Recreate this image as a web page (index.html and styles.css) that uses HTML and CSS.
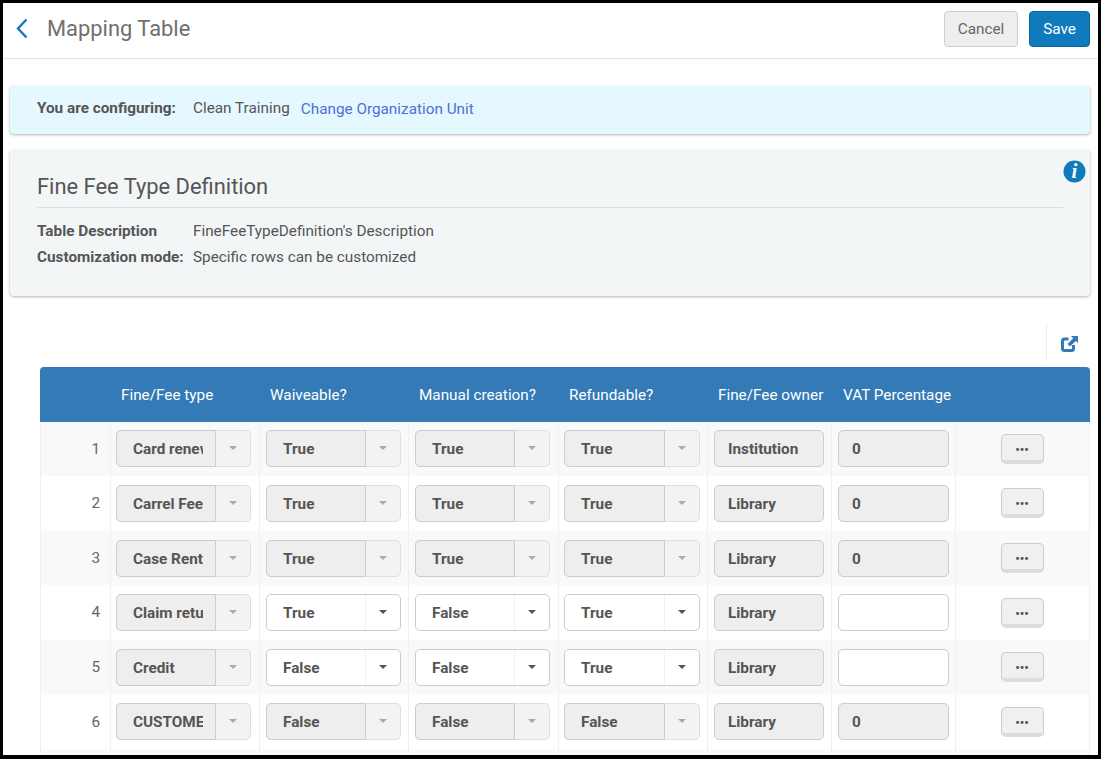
FILE: index.html
```html
<!DOCTYPE html>
<html>
<head>
  <title>Mapping Table</title>
  <meta name="viewport" content="width=device-width, initial-scale=1">
  <link rel="stylesheet" href="styles.css">
</head>
<body>
  <div class="frame">
    <header class="topbar">
      <svg class="back" width="12" height="21" viewBox="0 0 12 21"><path d="M10.5 1.5 L2 10.5 L10.5 19.5" fill="none" stroke="#0f7abc" stroke-width="2.4"/></svg>
      <h1>Mapping Table</h1>
      <button class="btn btn-cancel">Cancel</button>
      <button class="btn btn-save">Save</button>
    </header>

    <div class="banner">
      <b class="banner-label">You are configuring:</b>
      <span>Clean Training</span>
      <a href="#" class="banner-link">Change Organization Unit</a>
    </div>

    <div class="card">
      <svg class="info-icon" width="23" height="23" viewBox="0 0 23 23"><circle cx="11.5" cy="11.5" r="11" fill="#0f7abc"/><text x="11.5" y="18" text-anchor="middle" class="info-i">i</text></svg>
      <h2>Fine Fee Type Definition</h2>
      <div class="card-row"><b>Table Description</b><span>FineFeeTypeDefinition's Description</span></div>
      <div class="card-row"><b>Customization mode:</b><span>Specific rows can be customized</span></div>
    </div>

    <div class="toolbar">
      <div class="tool">
        <svg width="17" height="16" viewBox="0 0 17 16">
          <path d="M7.5 3 H3.5 Q1.5 3 1.5 5 V12.5 Q1.5 14.5 3.5 14.5 H10.5 Q12.5 14.5 12.5 12.5 V9" fill="none" stroke="#337ab7" stroke-width="3"/>
          <path d="M10 0 H17 V7 L14.8 4.9 L9 10.5 L6.5 8 L12.2 2.2 Z" fill="#337ab7"/>
        </svg>
      </div>
    </div>

    <div class="grid">
      <div class="row head">
        <div></div>
        <div class="th">Fine/Fee type</div>
        <div class="th">Waiveable?</div>
        <div class="th">Manual creation?</div>
        <div class="th">Refundable?</div>
        <div class="th">Fine/Fee owner</div>
        <div class="th th-vat">VAT Percentage</div>
        <div></div>
      </div>

      <div class="row">
        <div class="num">1</div>
        <div class="cell"><div class="sel off"><span class="val">Card renewal</span><i class="arrow"></i></div></div>
        <div class="cell"><div class="sel off"><span class="val">True</span><i class="arrow"></i></div></div>
        <div class="cell"><div class="sel off"><span class="val">True</span><i class="arrow"></i></div></div>
        <div class="cell"><div class="sel off"><span class="val">True</span><i class="arrow"></i></div></div>
        <div class="cell"><div class="field off">Institution</div></div>
        <div class="cell"><div class="field off">0</div></div>
        <div class="cell act"><button class="more">•••</button></div>
      </div>

      <div class="row">
        <div class="num">2</div>
        <div class="cell"><div class="sel off"><span class="val">Carrel Fee</span><i class="arrow"></i></div></div>
        <div class="cell"><div class="sel off"><span class="val">True</span><i class="arrow"></i></div></div>
        <div class="cell"><div class="sel off"><span class="val">True</span><i class="arrow"></i></div></div>
        <div class="cell"><div class="sel off"><span class="val">True</span><i class="arrow"></i></div></div>
        <div class="cell"><div class="field off">Library</div></div>
        <div class="cell"><div class="field off">0</div></div>
        <div class="cell act"><button class="more">•••</button></div>
      </div>

      <div class="row">
        <div class="num">3</div>
        <div class="cell"><div class="sel off"><span class="val">Case Rental</span><i class="arrow"></i></div></div>
        <div class="cell"><div class="sel off"><span class="val">True</span><i class="arrow"></i></div></div>
        <div class="cell"><div class="sel off"><span class="val">True</span><i class="arrow"></i></div></div>
        <div class="cell"><div class="sel off"><span class="val">True</span><i class="arrow"></i></div></div>
        <div class="cell"><div class="field off">Library</div></div>
        <div class="cell"><div class="field off">0</div></div>
        <div class="cell act"><button class="more">•••</button></div>
      </div>

      <div class="row">
        <div class="num">4</div>
        <div class="cell"><div class="sel off"><span class="val">Claim returned</span><i class="arrow"></i></div></div>
        <div class="cell"><div class="sel"><span class="val">True</span><i class="arrow"></i></div></div>
        <div class="cell"><div class="sel"><span class="val">False</span><i class="arrow"></i></div></div>
        <div class="cell"><div class="sel"><span class="val">True</span><i class="arrow"></i></div></div>
        <div class="cell"><div class="field off">Library</div></div>
        <div class="cell"><div class="field"></div></div>
        <div class="cell act"><button class="more">•••</button></div>
      </div>

      <div class="row">
        <div class="num">5</div>
        <div class="cell"><div class="sel off"><span class="val">Credit</span><i class="arrow"></i></div></div>
        <div class="cell"><div class="sel"><span class="val">False</span><i class="arrow"></i></div></div>
        <div class="cell"><div class="sel"><span class="val">False</span><i class="arrow"></i></div></div>
        <div class="cell"><div class="sel"><span class="val">True</span><i class="arrow"></i></div></div>
        <div class="cell"><div class="field off">Library</div></div>
        <div class="cell"><div class="field"></div></div>
        <div class="cell act"><button class="more">•••</button></div>
      </div>

      <div class="row">
        <div class="num">6</div>
        <div class="cell"><div class="sel off"><span class="val">CUSTOMER</span><i class="arrow"></i></div></div>
        <div class="cell"><div class="sel off"><span class="val">False</span><i class="arrow"></i></div></div>
        <div class="cell"><div class="sel off"><span class="val">False</span><i class="arrow"></i></div></div>
        <div class="cell"><div class="sel off"><span class="val">False</span><i class="arrow"></i></div></div>
        <div class="cell"><div class="field off">Library</div></div>
        <div class="cell"><div class="field off">0</div></div>
        <div class="cell act"><button class="more">•••</button></div>
      </div>

      <div class="row">
        <div class="num"></div>
        <div class="cell"></div>
        <div class="cell"></div>
        <div class="cell"></div>
        <div class="cell"></div>
        <div class="cell"></div>
        <div class="cell"></div>
        <div class="cell act"></div>
      </div>
    </div>
  </div>
</body>
</html>
```

FILE: styles.css
```css
* {
  box-sizing: border-box;
  margin: 0;
  padding: 0;
}

html, body {
  height: 759px;
  overflow: hidden;
}

body {
  font-family: Roboto, "Liberation Sans", sans-serif;
  font-size: 15.3px;
  color: #555;
  background-color: #000;
}

.frame {
  width: 1095px;
  height: 752px;
  margin: 3px 0 0 3px;
  background-color: #fff;
  overflow: hidden;
}

.topbar {
  display: flex;
  align-items: center;
  height: 56px;
  border-bottom: 1px solid #e4e4e4;
  padding: 0 8px 4px 13px;
}

.back {
  margin-right: 19px;
}

.topbar h1 {
  flex: 1;
  font-size: 21.9px;
  font-weight: 400;
  color: #6f6f6f;
}

.btn {
  height: 36px;
  border-radius: 4px;
  font-family: inherit;
  font-size: 15.3px;
}

.btn-cancel {
  width: 74px;
  margin-right: 11px;
  background-color: #eee;
  border: 1px solid #ccc;
  color: #666;
}

.btn-save {
  width: 61px;
  background-color: #0f7abc;
  border: 1px solid #0b669e;
  color: #fff;
}

.banner {
  display: flex;
  align-items: center;
  height: 48px;
  margin: 27px 8px 0 7px;
  padding: 0 0 4px 27px;
  background-color: #e5f8ff;
  border-radius: 4px;
  box-shadow: 0 1px 3px rgba(0, 0, 0, 0.3);
}

.banner-label {
  width: 156px;
  font-weight: 700;
}

.banner-link {
  margin: 2px 0 0 11px;
  color: #4e6fd6;
  text-decoration: none;
}

.card {
  position: relative;
  height: 146px;
  margin: 16px 8px 0 7px;
  padding: 24px 27px 0;
  background-color: #f3f6f7;
  border-radius: 4px;
  box-shadow: 0 1px 3px rgba(0, 0, 0, 0.3);
}

.card h2 {
  height: 34px;
  margin-bottom: 10px;
  border-bottom: 1px solid #ddd;
  font-size: 21.9px;
  font-weight: 400;
  color: #555;
}

.card-row {
  display: flex;
  height: 26px;
  line-height: 26px;
}

.card-row b {
  width: 156px;
}

.info-icon {
  position: absolute;
  top: 10px;
  right: 4px;
}

.info-i {
  font-family: "Liberation Serif", serif;
  font-size: 21px;
  font-style: italic;
  font-weight: 700;
  fill: #fff;
}

.toolbar {
  display: flex;
  justify-content: flex-end;
  height: 71px;
  padding: 27px 8px 0 0;
}

.tool {
  display: flex;
  align-items: center;
  width: 44px;
  height: 38px;
  padding: 4px 0 0 14px;
  border-left: 1px solid #eee;
}

.grid {
  margin: 0 8px 0 37px;
}

.row {
  display: grid;
  grid-template-columns: 70px 149px 149px 150px 149px 124px 124px 135px;
  height: 54.6px;
  background-color: #fff;
}

.row:nth-child(even) {
  background-color: #f9f9f9;
}

.row.head {
  align-items: center;
  padding-top: 1px;
  background-color: #337ab7;
  border-radius: 4px 4px 0 0;
  color: #fff;
}

.th {
  padding: 0 0 0 11px;
  white-space: nowrap;
}

.th-vat {
  padding-left: 12px;
}

.num {
  padding: 18px 10px 0 0;
  text-align: right;
  color: #666;
  border-left: 1px solid #f0f0f0;
}

.cell {
  display: flex;
  align-items: center;
  padding: 0 7px 0 6px;
  border-left: 1px solid #f0f0f0;
}

.cell:nth-child(2) {
  padding: 0 8px 0 5px;
}

.cell:nth-child(4) {
  padding-right: 8px;
}

.cell:nth-child(5) {
  padding-left: 5px;
}

.cell:nth-child(7) {
  padding-right: 6px;
}

.cell.act {
  justify-content: center;
  border-right: 1px solid #f0f0f0;
}

.sel {
  display: flex;
  flex: 1 1 0;
  min-width: 0;
  height: 37px;
  background-color: #fff;
  border: 1px solid #c3ced9;
  border-radius: 5px;
  font-weight: 700;
}

/* the text stops short of the divider, as in a truncated select */
.val {
  position: relative;
  flex: 1 1 0;
  min-width: 0;
  padding-left: 16px;
  line-height: 36px;
  white-space: nowrap;
  overflow: hidden;
  border-right: 1px solid #f2f2f2;
  border-radius: 5px 0 0 5px;
  background-color: #fff;
}

.val::after {
  content: "";
  position: absolute;
  top: 0;
  right: 0;
  bottom: 0;
  width: 12px;
  background-color: inherit;
}

.arrow {
  position: relative;
  flex: 0 0 34px;
}

.arrow::after {
  content: "";
  position: absolute;
  top: 15px;
  left: 13px;
  border-top: 4px solid #555;
  border-left: 4px solid transparent;
  border-right: 4px solid transparent;
}

.sel.off {
  background-color: #f3f3f3;
  border-color: #dcdfe3;
}

.sel.off .val {
  margin: -1px 0 -1px -1px;
  background-color: #eee;
  border: 1px solid #c3ced9;
  border-radius: 5px 0 0 5px;
}

.sel.off .arrow::after {
  border-top-color: #aaa;
}

.field {
  flex: 1;
  height: 37px;
  padding-left: 13px;
  line-height: 36px;
  background-color: #fff;
  border: 1px solid #ccc;
  border-radius: 5px;
  font-weight: 700;
}

.field.off {
  background-color: #eee;
}

.more {
  width: 43px;
  height: 30px;
  padding-top: 4px;
  background-color: #f0f0f0;
  border: 1px solid #ccc;
  border-bottom: 4px solid #dcdcdc;
  border-radius: 5px;
  font-family: inherit;
  font-size: 12.5px;
  font-weight: 700;
  color: #555;
}
```
